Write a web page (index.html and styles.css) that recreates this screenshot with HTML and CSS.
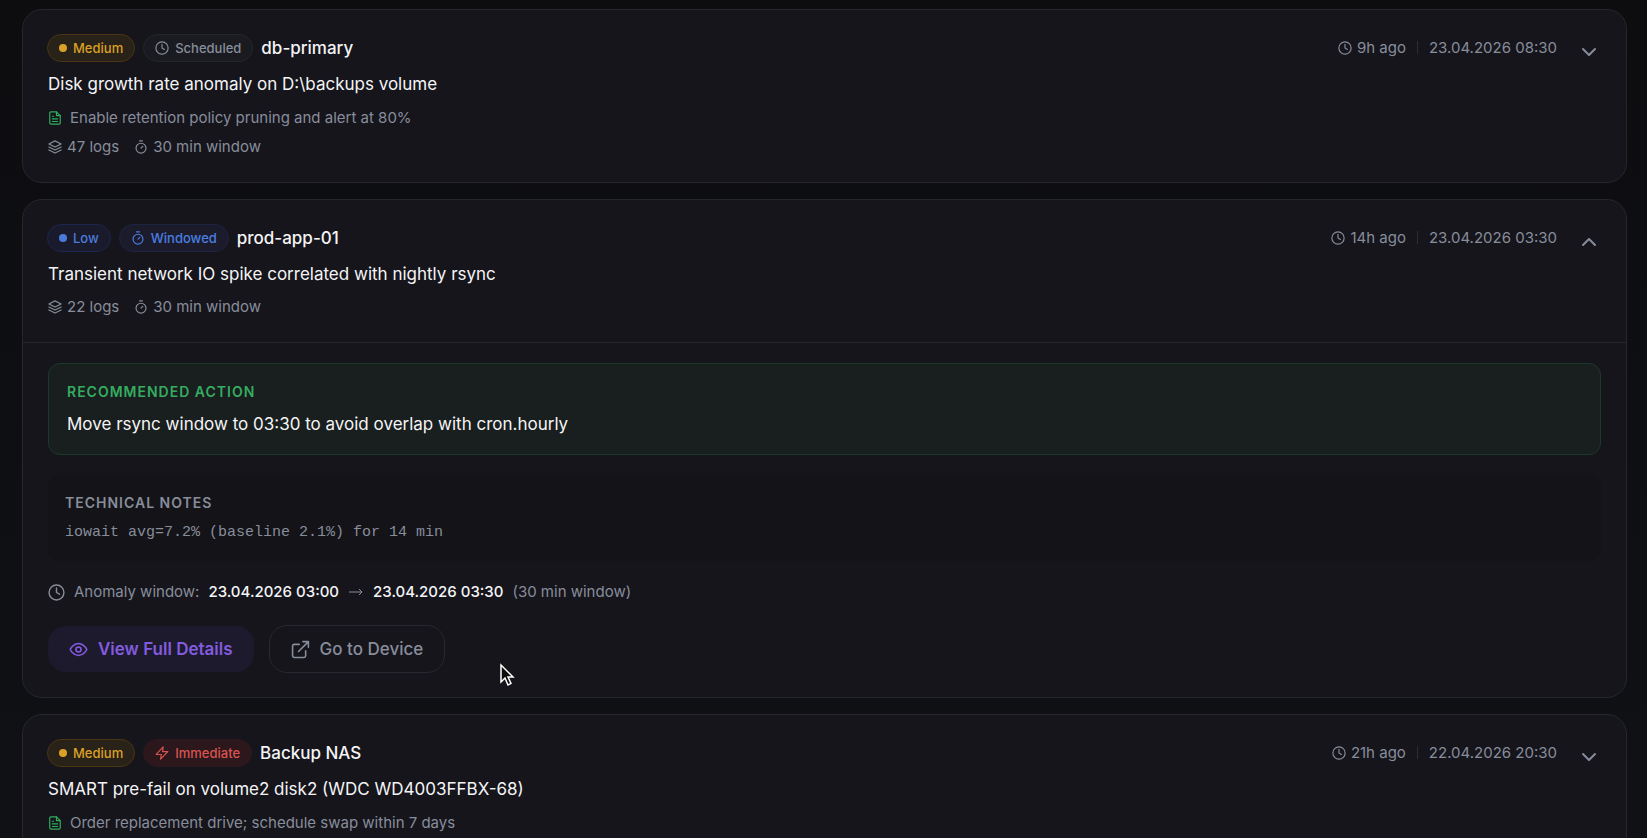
FILE: index.html
```
<!DOCTYPE html>
<html lang="en">
<head>
    <meta charset="UTF-8">
    <meta name="viewport" content="width=device-width, initial-scale=1.0">
    <title>Insights</title>
    <link rel="stylesheet" href="styles.css">
</head>
<body>
    <!-- Shared icons -->
    <svg class="sprite" aria-hidden="true">
        <symbol id="i-clock" viewBox="0 0 24 24"><circle cx="12" cy="12" r="10.5"/><path d="M12 5.5V12l4.2 2.4"/></symbol>
        <symbol id="i-timer" viewBox="0 0 24 24"><path d="M9.5 1.5h5"/><circle cx="12" cy="14" r="8.5"/><path d="m12 14 3-3"/></symbol>
        <symbol id="i-layers" viewBox="0 0 24 24"><path d="m12 1.5 10.5 5.2L12 12 1.5 6.7z"/><path d="m1.5 12 10.5 5.2L22.5 12"/><path d="m1.5 17 10.5 5.2L22.5 17"/></symbol>
        <symbol id="i-file" viewBox="0 0 24 24"><path d="M14.5 1.5H5a2 2 0 0 0-2 2v17a2 2 0 0 0 2 2h14a2 2 0 0 0 2-2V8z"/><path d="M14.5 1.5V8H21M7.5 9h2M7.5 13.5h9M7.5 18h9"/></symbol>
        <symbol id="i-zap" viewBox="0 0 24 24"><path d="M14 1.5 2 14.5h9l-1.5 8L22 9.5h-9z"/></symbol>
        <symbol id="i-eye" viewBox="0 0 24 24"><path d="M1.5 12S5 4.5 12 4.5 22.5 12 22.5 12 19 19.5 12 19.5 1.5 12 1.5 12z"/><circle cx="12" cy="12" r="3.2"/></symbol>
        <symbol id="i-external" viewBox="0 0 24 24"><path d="M18.5 13.5V20a2 2 0 0 1-2 2H4a2 2 0 0 1-2-2V7.5a2 2 0 0 1 2-2h6.5M15 2h7v7M9.5 14.5 22 2"/></symbol>
        <symbol id="i-down" viewBox="0 0 24 24"><path d="m6 9 6 6 6-6"/></symbol>
        <symbol id="i-up" viewBox="0 0 24 24"><path d="m18 15-6-6-6 6"/></symbol>
    </svg>

    <main class="list">
        <article class="card">
            <div class="card-head">
                <div class="card-main">
                    <div class="card-top">
                        <span class="badge medium"><i class="dot"></i>Medium</span>
                        <span class="badge scheduled"><svg class="icon"><use href="#i-clock"/></svg>Scheduled</span>
                        <h2 class="device">db-primary</h2>
                        <div class="when">
                            <svg class="icon"><use href="#i-clock"/></svg>
                            <span>9h ago</span>
                            <time class="date">23.04.2026 08:30</time>
                        </div>
                    </div>
                    <p class="summary">Disk growth rate anomaly on D:\backups volume</p>
                    <p class="hint"><svg class="icon"><use href="#i-file"/></svg>Enable retention policy pruning and alert at 80%</p>
                    <div class="meta">
                        <span><svg class="icon"><use href="#i-layers"/></svg>47 logs</span>
                        <span><svg class="icon"><use href="#i-timer"/></svg>30 min window</span>
                    </div>
                </div>
                <button class="toggle" type="button" aria-label="Expand"><svg class="icon"><use href="#i-down"/></svg></button>
            </div>
        </article>

        <article class="card">
            <div class="card-head">
                <div class="card-main">
                    <div class="card-top">
                        <span class="badge low"><i class="dot"></i>Low</span>
                        <span class="badge windowed"><svg class="icon"><use href="#i-timer"/></svg>Windowed</span>
                        <h2 class="device">prod-app-01</h2>
                        <div class="when">
                            <svg class="icon"><use href="#i-clock"/></svg>
                            <span>14h ago</span>
                            <time class="date">23.04.2026 03:30</time>
                        </div>
                    </div>
                    <p class="summary">Transient network IO spike correlated with nightly rsync</p>
                    <div class="meta">
                        <span><svg class="icon"><use href="#i-layers"/></svg>22 logs</span>
                        <span><svg class="icon"><use href="#i-timer"/></svg>30 min window</span>
                    </div>
                </div>
                <button class="toggle" type="button" aria-label="Collapse"><svg class="icon"><use href="#i-up"/></svg></button>
            </div>
            <div class="card-body">
                <section class="action">
                    <h3>Recommended action</h3>
                    <p>Move rsync window to 03:30 to avoid overlap with cron.hourly</p>
                </section>
                <section class="notes">
                    <h3>Technical notes</h3>
                    <p>iowait avg=7.2% (baseline 2.1%) for 14 min</p>
                </section>
                <div class="window">
                    <svg class="icon"><use href="#i-clock"/></svg>
                    <span>Anomaly window:</span>
                    <strong>23.04.2026 03:00</strong>
                    <svg class="arrow" viewBox="0 0 16 16"><path d="M1 8h13M11 5l3 3-3 3"/></svg>
                    <strong>23.04.2026 03:30</strong>
                    <span>(30 min window)</span>
                </div>
                <div class="buttons">
                    <button class="btn primary" type="button"><svg class="icon"><use href="#i-eye"/></svg>View Full Details</button>
                    <button class="btn outline" type="button"><svg class="icon"><use href="#i-external"/></svg>Go to Device</button>
                </div>
            </div>
        </article>

        <article class="card">
            <div class="card-head">
                <div class="card-main">
                    <div class="card-top">
                        <span class="badge medium"><i class="dot"></i>Medium</span>
                        <span class="badge immediate"><svg class="icon"><use href="#i-zap"/></svg>Immediate</span>
                        <h2 class="device">Backup NAS</h2>
                        <div class="when">
                            <svg class="icon"><use href="#i-clock"/></svg>
                            <span>21h ago</span>
                            <time class="date">22.04.2026 20:30</time>
                        </div>
                    </div>
                    <p class="summary">SMART pre-fail on volume2 disk2 (WDC WD4003FFBX-68)</p>
                    <p class="hint"><svg class="icon"><use href="#i-file"/></svg>Order replacement drive; schedule swap within 7 days</p>
                </div>
                <button class="toggle" type="button" aria-label="Expand"><svg class="icon"><use href="#i-down"/></svg></button>
            </div>
        </article>
    </main>

    <svg class="cursor" viewBox="0 0 16 24" aria-hidden="true"><path d="M2 2v17l4-4 3 7 3-1.5-3-6.5h5z"/></svg>
</body>
</html>
```
FILE: styles.css
```
* {
    box-sizing: border-box;
}
body {
    margin: 0;
    height: 100vh;
    overflow: hidden;
    background: linear-gradient(#0d0d10, #0f1115);
    color: #f4f4f6;
    font-family: Inter, "Liberation Sans", sans-serif;
}
h2, h3, p {
    margin: 0;
}
button {
    font-family: inherit;
    cursor: pointer;
}
.sprite {
    display: none;
}
.icon {
    width: 14px;
    height: 14px;
    flex: none;
    fill: none;
    stroke: currentColor;
    stroke-width: 2;
    stroke-linecap: round;
    stroke-linejoin: round;
}
.list {
    display: flex;
    flex-direction: column;
    gap: 16px;
    padding: 9px 20px 0 22px;
}

/* Cards */
.card {
    flex: none;
    background: #15151b;
    border: 1px solid #26262d;
    border-radius: 20px;
}
.card-head {
    display: flex;
    align-items: flex-start;
    gap: 20px;
    padding: 24px 25px;
}
.card-main {
    flex: 1;
    min-width: 0;
}
.card-top {
    display: flex;
    align-items: center;
    gap: 8px;
    height: 27px;
    margin: 0 0 9px -1px;
}
.device {
    font-size: 17px;
    font-weight: 500;
}
.when {
    display: flex;
    align-items: center;
    gap: 5px;
    margin-left: auto;
    font-size: 15px;
    color: #888d9b;
}
.date {
    margin-left: 6px;
    padding-left: 12px;
    position: relative;
}
.date::before {
    content: "";
    position: absolute;
    left: 0;
    top: 3px;
    bottom: 3px;
    width: 1px;
    background: #2b2c34;
}
.summary {
    font-size: 17px;
    line-height: 28px;
}
.hint {
    display: flex;
    align-items: center;
    gap: 8px;
    margin-top: 8px;
    font-size: 15px;
    line-height: 24px;
    color: #888d9b;
}
.hint .icon {
    color: #2fae5d;
}
.meta {
    display: flex;
    gap: 15px;
    margin-top: 8px;
    font-size: 15px;
    line-height: 22px;
    color: #888d9b;
}
.hint + .meta {
    margin-top: 6px;
}
.meta span {
    display: flex;
    align-items: center;
    gap: 5px;
}
.toggle {
    margin: 6px 0 0;
    padding: 0;
    border: 0;
    background: none;
    color: #888d9b;
}
.toggle .icon {
    display: block;
    width: 24px;
    height: 24px;
}

/* Badges */
.badge {
    display: flex;
    align-items: center;
    gap: 6px;
    height: 28px;
    padding: 0 11px;
    border: 1px solid;
    border-radius: 14px;
    font-size: 13px;
    font-weight: 500;
}
.dot {
    width: 8px;
    height: 8px;
    border-radius: 50%;
    background: currentColor;
}
.medium {
    background: #282218;
    border-color: #4a3412;
    color: #dba026;
}
.low {
    background: #191a2b;
    border-color: #1f2450;
    color: #4a7bd9;
}
.scheduled {
    background: #1a1b20;
    border-color: #24262c;
    color: #888d9b;
}
.windowed {
    background: #1b1b2b;
    border-color: #1e2340;
    color: #4a7ee0;
}
.immediate {
    background: #2b171c;
    border-color: #2e181d;
    color: #d95450;
}

/* Expanded part */
.card-body {
    display: flex;
    flex-direction: column;
    gap: 20px;
    padding: 20px 25px 24px;
    border-top: 1px solid #26262d;
}
.card-body h3 {
    font-size: 14px;
    font-weight: 600;
    line-height: 20px;
    letter-spacing: 1px;
    text-transform: uppercase;
}
.action {
    padding: 18px 18px 17px;
    background: #191e1e;
    border: 1px solid #1c3a2a;
    border-radius: 12px;
}
.action h3 {
    margin-bottom: 9px;
    color: #35ac60;
}
.action p {
    font-size: 17px;
    line-height: 26px;
}
.notes {
    padding: 18px 17px 16px;
    background: #131318;
    border-radius: 12px;
    color: #888d9b;
}
.notes h3 {
    margin-bottom: 8px;
}
.notes p {
    font-family: "Liberation Mono", monospace;
    font-size: 15px;
    line-height: 24px;
}
.window {
    display: flex;
    align-items: center;
    gap: 9px;
    font-size: 15px;
    line-height: 22px;
    color: #888d9b;
}
.window .icon {
    width: 17px;
    height: 17px;
}
.window strong {
    font-weight: 500;
    color: #f4f4f6;
}
.arrow {
    width: 16px;
    height: 16px;
    fill: none;
    stroke: currentColor;
}
.buttons {
    display: flex;
    align-items: center;
    gap: 15px;
    margin-top: 2px;
}
.btn {
    display: flex;
    align-items: center;
    gap: 10px;
    height: 46px;
    padding: 0 21px;
    border: 0;
    border-radius: 18px;
    font-size: 17px;
    font-weight: 500;
}
.btn .icon {
    width: 19px;
    height: 19px;
}
.primary {
    background: #1c1a2c;
    color: #835bdf;
    font-weight: 600;
}
.outline {
    height: 48px;
    border: 1px solid #282930;
    background: none;
    color: #888d9b;
}

/* Mouse pointer over the page */
.cursor {
    position: absolute;
    left: 499px;
    top: 663px;
    width: 16px;
    height: 24px;
    fill: #0d0d10;
    stroke: #fff;
    stroke-width: 1.5;
}
```
